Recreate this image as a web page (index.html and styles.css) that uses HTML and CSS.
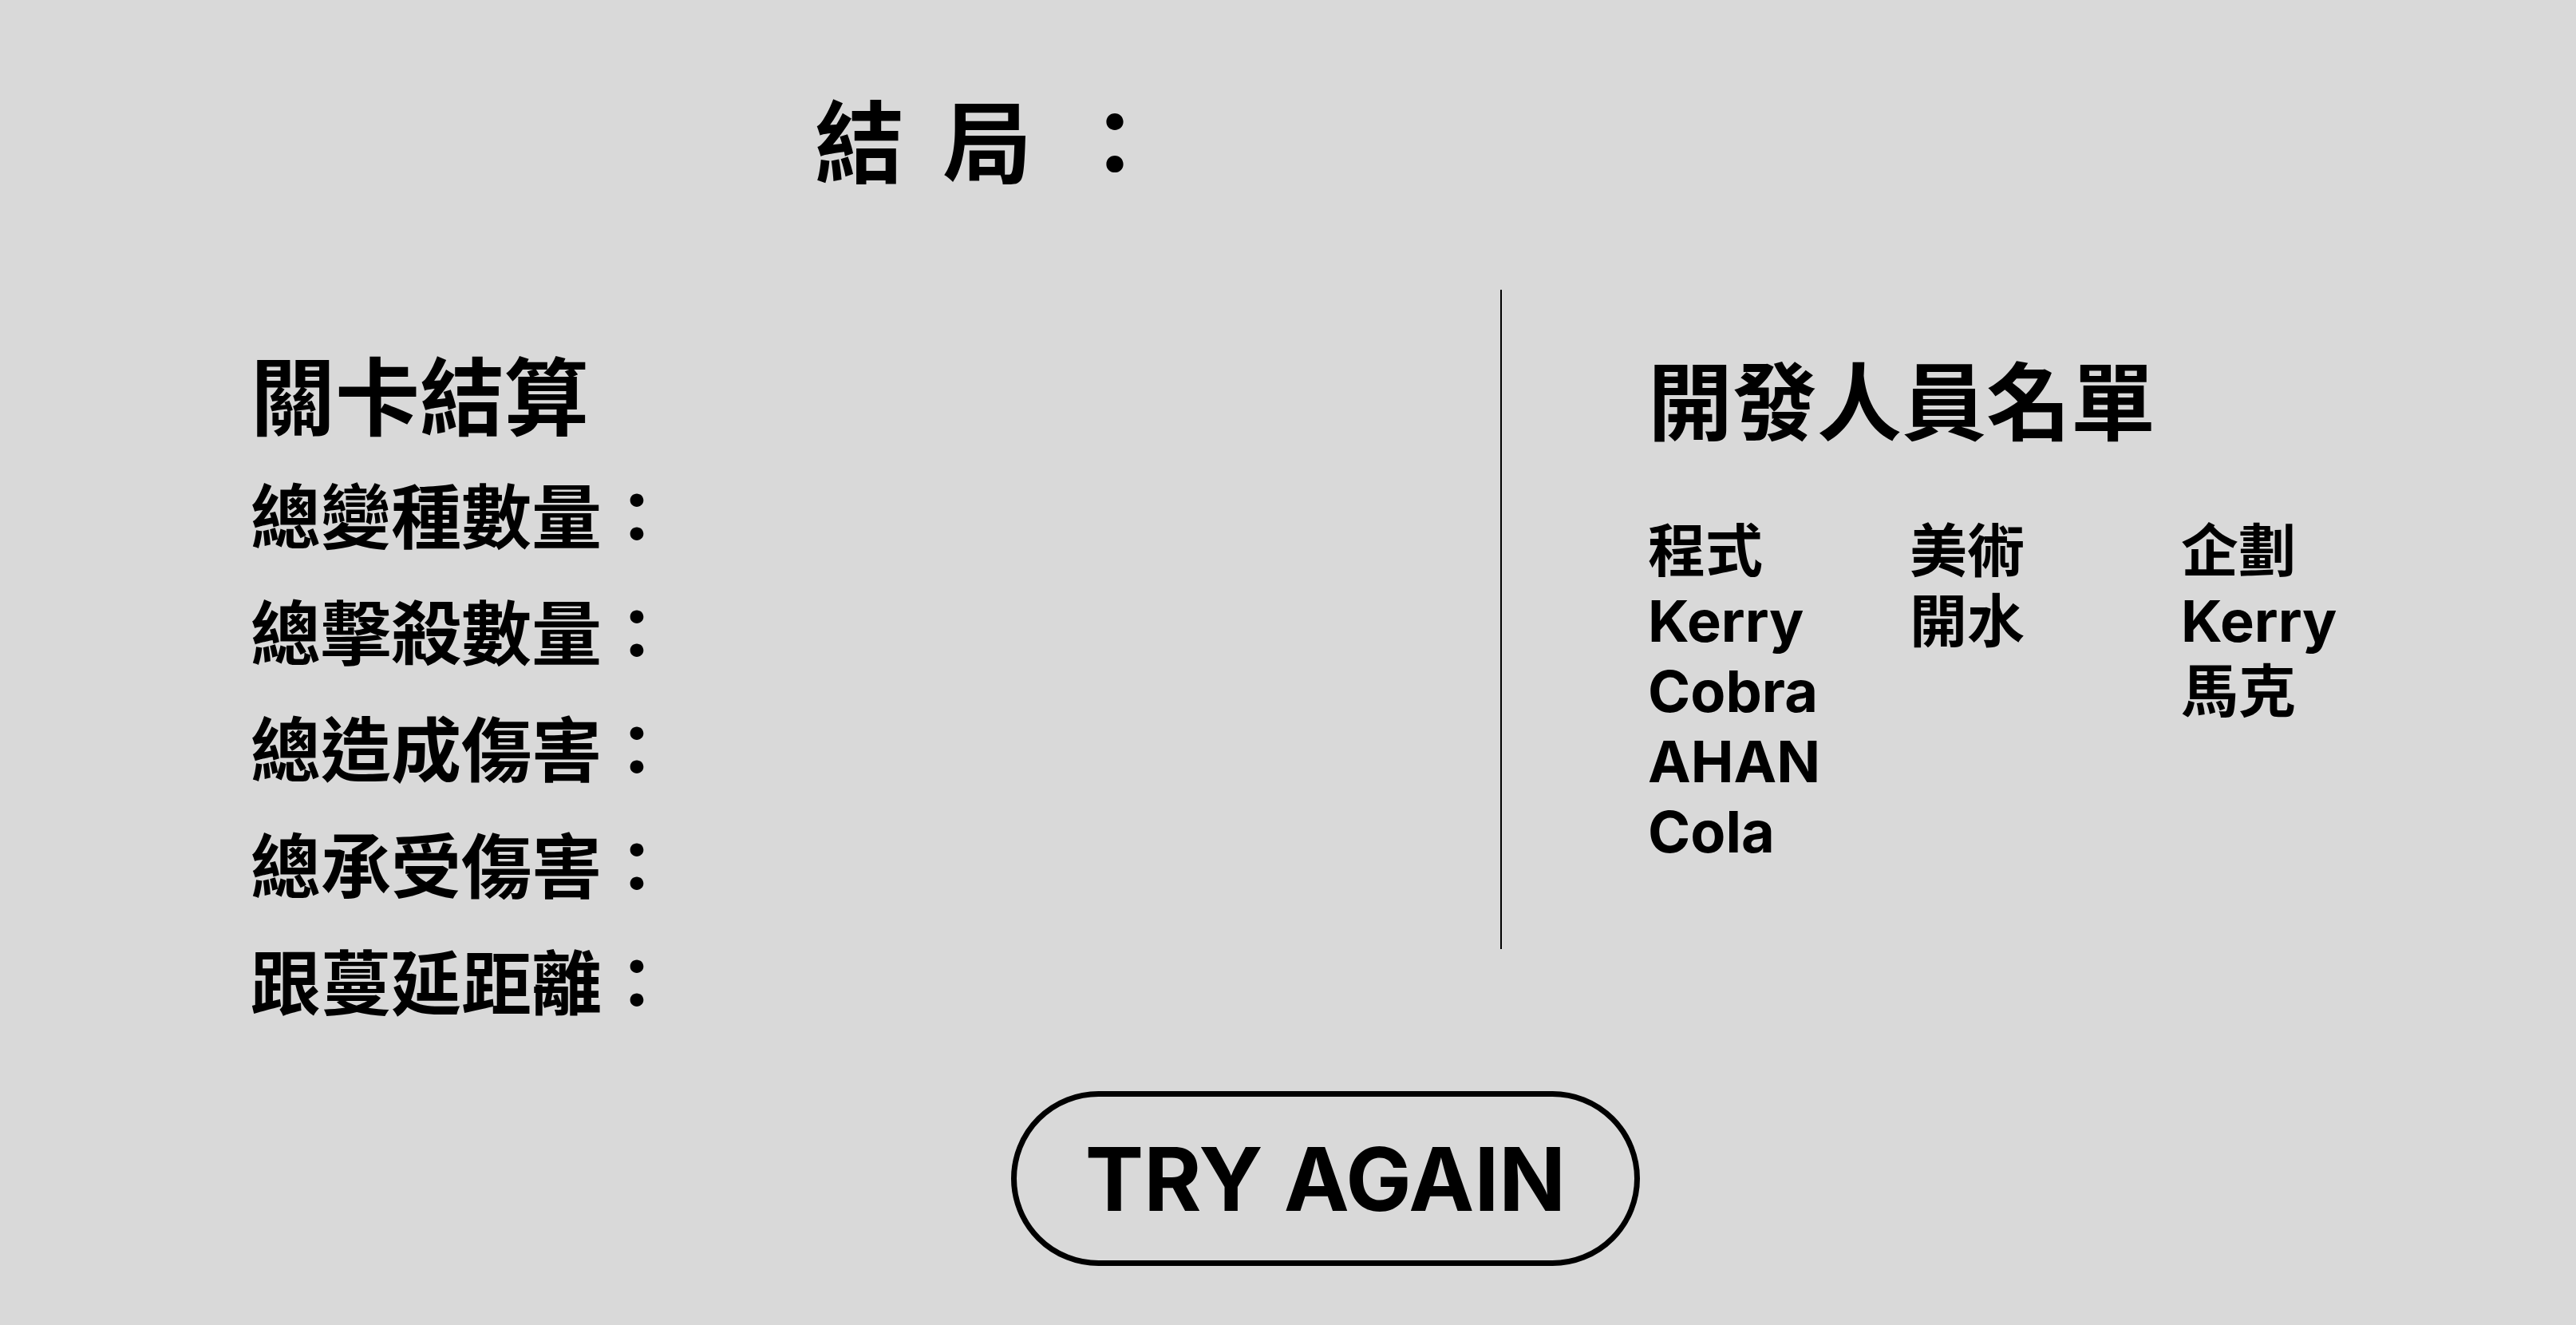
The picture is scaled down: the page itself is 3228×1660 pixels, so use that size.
FILE: index.html
```html
<!DOCTYPE html>
<html lang="zh-Hant">
<head>
<meta charset="utf-8">
<title>結局</title>
<link rel="stylesheet" href="styles.css">
</head>
<body>
<div class="page">
  <h1 class="result-title">結局：</h1>
  <main class="main">
    <section class="stats">
      <h2 class="section-title">關卡結算</h2>
      <ul class="stat-list">
        <li>總變種數量：</li>
        <li>總擊殺數量：</li>
        <li>總造成傷害：</li>
        <li>總承受傷害：</li>
        <li>跟蔓延距離：</li>
      </ul>
    </section>
    <div class="divider"></div>
    <section class="credits">
      <h2 class="section-title credits-title">開發人員名單</h2>
      <div class="credit-grid">
        <ul class="credit-col">
          <li>程式</li>
          <li>Kerry</li>
          <li>Cobra</li>
          <li>AHAN</li>
          <li>Cola</li>
        </ul>
        <ul class="credit-col">
          <li>美術</li>
          <li>開水</li>
        </ul>
        <ul class="credit-col">
          <li>企劃</li>
          <li>Kerry</li>
          <li>馬克</li>
        </ul>
      </div>
    </section>
  </main>
  <div class="actions">
    <button class="try-again" type="button">TRY AGAIN</button>
  </div>
</div>
</body>
</html>
```
FILE: styles.css
```css
* {
  box-sizing: border-box;
}

html, body {
  margin: 0;
  padding: 0;
}

body {
  background: #d9d9d9;
  color: #000;
  font-family: "Inter", "Noto Sans CJK TC", "Noto Sans", sans-serif;
  font-weight: 700;
  width: 3228px;
  height: 1660px;
  overflow: hidden;
}

.page {
  display: flex;
  flex-direction: column;
  padding-top: 116px;
}

.result-title {
  margin: 0;
  padding-left: 1021px;
  font-family: "Noto Sans CJK TC", sans-serif;
  font-size: 112px;
  line-height: 1;
  font-weight: 700;
  letter-spacing: 48px;
}

.main {
  display: grid;
  grid-template-columns: 1880px 2px 1fr;
  margin-top: 135px;
  align-items: start;
}

.stats {
  padding-left: 314px;
  padding-top: 75px;
}

.section-title {
  margin: 0;
  font-family: "Noto Sans CJK TC", sans-serif;
  font-size: 106px;
  line-height: 1;
  font-weight: 700;
}

.stat-list {
  list-style: none;
  margin: 25px 0 0;
  padding: 0;
  font-family: "Noto Sans CJK TC", sans-serif;
  font-size: 88px;
  line-height: 146px;
}

.divider {
  width: 2px;
  height: 826px;
  background: #000;
}

.credits {
  padding-left: 183px;
  padding-top: 81px;
}

.credit-grid {
  display: grid;
  grid-template-columns: 328px 340px auto;
  margin-top: 96px;
}

.credit-col {
  list-style: none;
  margin: 0;
  padding: 0;
  font-size: 72px;
  line-height: 88px;
}

.actions {
  display: flex;
  padding-left: 1267px;
  margin-top: 68px;
}

.try-again {
  width: 788px;
  height: 219px;
  border: 7px solid #000;
  border-radius: 110px;
  background: transparent;
  color: #000;
  font-family: "Inter", sans-serif;
  font-weight: 700;
  font-size: 110px;
  display: flex;
  align-items: center;
  justify-content: center;
  padding: 0;
}
```
